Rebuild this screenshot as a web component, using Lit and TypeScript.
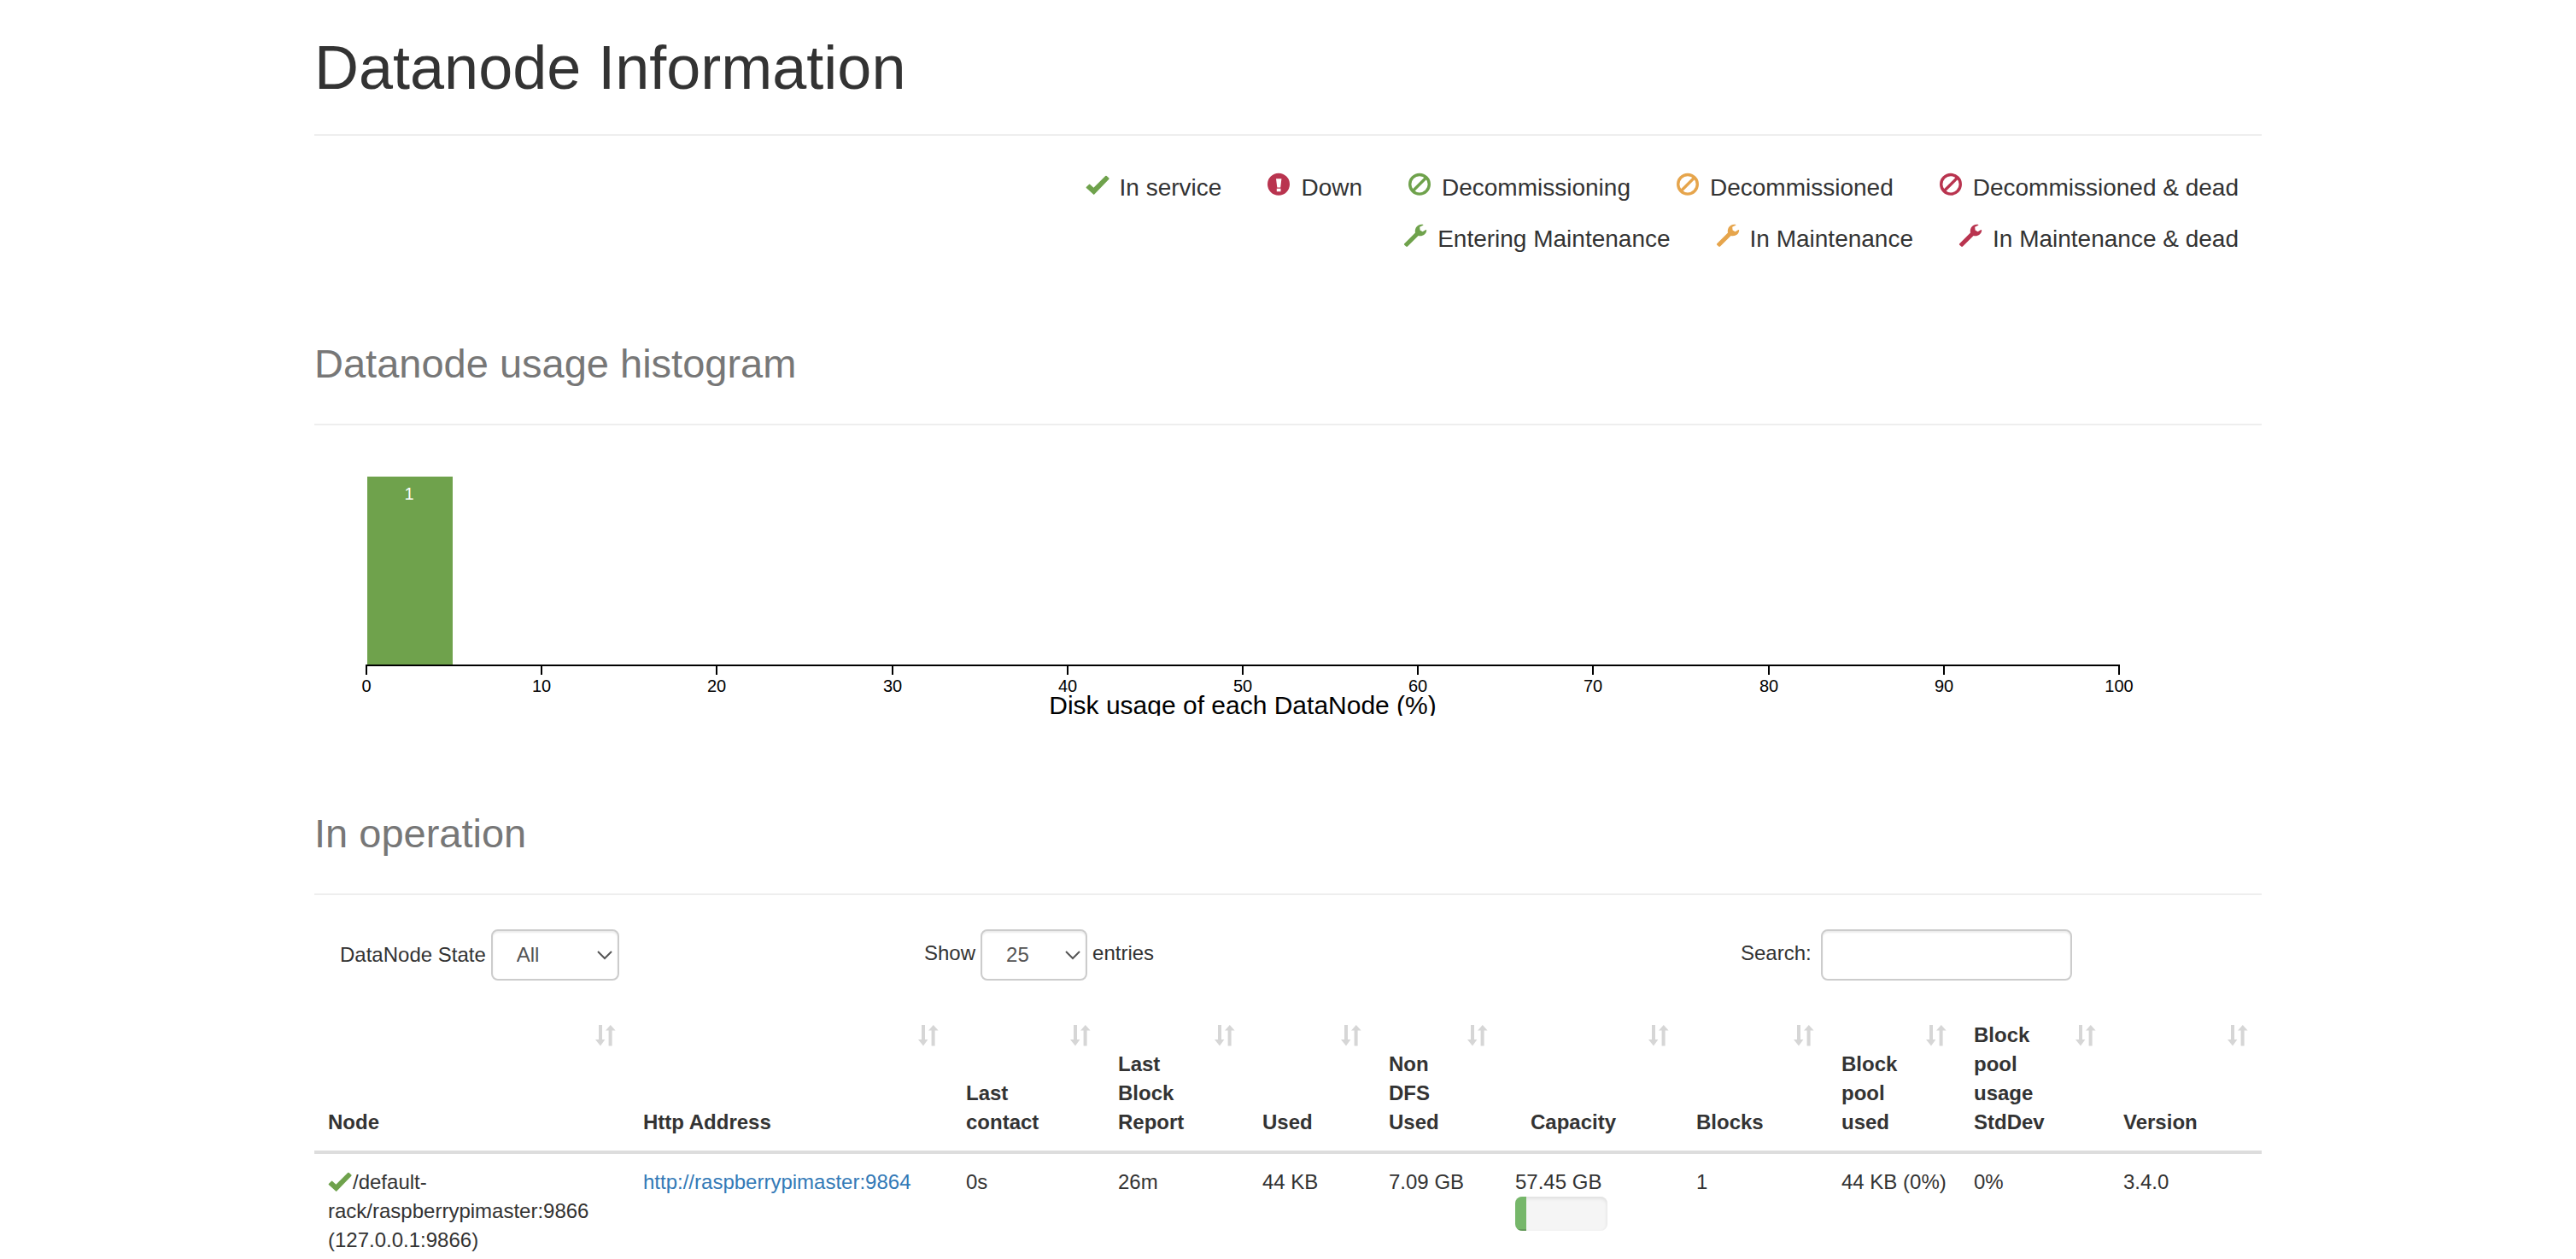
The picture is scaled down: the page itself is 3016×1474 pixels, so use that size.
import { LitElement, html, svg, css, nothing } from "lit";
import { customElement, property } from "lit/decorators.js";
import { classMap } from "lit/directives/class-map.js";

type Tone = "ok" | "warn" | "bad";
type Shape = "check" | "alert" | "ban" | "wrench";

@customElement("state-icon")
export class StateIcon extends LitElement {
  @property() shape: Shape = "check";
  @property() tone: Tone = "ok";

  static styles = css`
    :host {
      display: inline-block;
      width: 28px;
      height: 28px;
    }
    .icon {
      display: block;
      width: 28px;
      height: 28px;
    }
    .ok {
      color: #6fa24c;
    }
    .warn {
      color: #e6a54c;
    }
    .bad {
      color: #b9344f;
    }
  `;

  private glyph() {
    switch (this.shape) {
      case "check":
        return svg`<path fill="currentColor" d="M0.8 17 4.2 13.8Q4.8 13.4 5.3 13.9L9.4 17.8 23.2 4Q24 3.4 24.7 4L27.4 6.6Q27.9 7.2 27.4 7.8L10.3 25.6Q9.7 26.2 9.1 25.6L0.8 18Q0.4 17.5 0.8 17Z"/>`;
      case "alert":
        return svg`<path fill="currentColor" fill-rule="evenodd" d="M14 0.8A13 13 0 1 1 14 26.8A13 13 0 1 1 14 0.8ZM11 7.2 12.3 17.4H16.2L17.4 7.2ZM11.8 18.7V22.3H16.5V18.7Z"/>`;
      case "ban":
        return svg`<g fill="none" stroke="currentColor" stroke-width="3.4"><circle cx="14" cy="13.8" r="11.3"/><path d="M6 21.8 22 5.8"/></g>`;
      case "wrench":
        return svg`<path fill="currentColor" d="M1.2 23.2 14 10.6C12.8 5 17 -0.6 23.2 0.9Q23.8 1.3 23.2 1.7L19.2 3.7 19.6 7.4 22.6 9.2 26.4 6.9Q27.3 6.8 27.2 8C26.8 12.4 22.2 15.2 17.6 14L5 26.6Q4 27.4 3.2 26.6L1.2 24.7Q0.6 24 1.2 23.2Z"/>`;
    }
  }

  render() {
    return html`<svg class="icon ${this.tone}" viewBox="0 0 28 28" aria-hidden="true">${this.glyph()}</svg>`;
  }
}

interface Bin {
  from: number;
  to: number;
  count: number;
}

@customElement("usage-histogram")
export class UsageHistogram extends LitElement {
  @property({ attribute: false }) bins: Bin[] = [];

  static styles = css`
    :host {
      display: block;
    }
    .chart {
      display: block;
      width: 100%;
      height: auto;
      overflow: hidden;
    }
    .axis {
      fill: none;
      stroke: #000;
      stroke-width: 2;
    }
    .bar {
      fill: #6fa24c;
    }
    .tick,
    .count {
      font-size: 20px;
      text-anchor: middle;
    }
    .count {
      fill: #fff;
    }
    .title {
      font-size: 30px;
      text-anchor: middle;
    }
  `;

  render() {
    const left = 61;
    const right = 2113;
    const top = 20;
    const base = 241;
    const x = (v: number) => Math.round(left + ((right - left) * v) / 100);
    const max = Math.max(1, ...this.bins.map((b) => b.count));
    const ticks = [0, 10, 20, 30, 40, 50, 60, 70, 80, 90, 100];
    return html`
      <svg class="chart" viewBox="0 0 2280 300" role="img" aria-label="Datanode usage histogram">
        ${this.bins.map((b) => {
          const h = ((base - 1 - top) * b.count) / max;
          return svg`
            <rect class="bar" x=${x(b.from) + 1} y=${base - 1 - h} width=${x(b.to) - x(b.from) - 3} height=${h}></rect>
            <text class="count" x=${Math.round((x(b.from) + x(b.to)) / 2) - 2} y=${base - h + 26}>${b.count}</text>`;
        })}
        <path class="axis" d="M${left} 252V${base}H${right}V252"></path>
        ${ticks.map(
          (t) => svg`
            ${t > 0 && t < 100 ? svg`<path class="axis" d="M${x(t)} ${base}V252"></path>` : nothing}
            <text class="tick" x=${x(t)} y="272">${t}</text>`
        )}
        <text class="title" x=${x(50)} y="298">Disk usage of each DataNode (%)</text>
      </svg>
    `;
  }
}

interface Column {
  label: string;
  width: number;
  centered?: boolean;
}

const COLUMNS: Column[] = [
  { label: "Node", width: 369 },
  { label: "Http Address", width: 378 },
  { label: "Last contact", width: 178 },
  { label: "Last Block Report", width: 169 },
  { label: "Used", width: 148 },
  { label: "Non DFS Used", width: 148 },
  { label: "Capacity", width: 212, centered: true },
  { label: "Blocks", width: 170 },
  { label: "Block pool used", width: 155 },
  { label: "Block pool usage StdDev", width: 175 },
  { label: "Version", width: 178 },
];

const TOTAL_WIDTH = COLUMNS.reduce((sum, c) => sum + c.width, 0);

const NODES = [
  {
    name: "/default-rack/raspberrypimaster:9866",
    address: "(127.0.0.1:9866)",
    http: "http://raspberrypimaster:9864",
    contact: "0s",
    report: "26m",
    used: "44 KB",
    nonDfs: "7.09 GB",
    capacity: "57.45 GB",
    percent: 12,
    blocks: "1",
    poolUsed: "44 KB (0%)",
    stdDev: "0%",
    version: "3.4.0",
  },
];

const LEGEND: { shape: Shape; tone: Tone; label: string }[][] = [
  [
    { shape: "check", tone: "ok", label: "In service" },
    { shape: "alert", tone: "bad", label: "Down" },
    { shape: "ban", tone: "ok", label: "Decommissioning" },
    { shape: "ban", tone: "warn", label: "Decommissioned" },
    { shape: "ban", tone: "bad", label: "Decommissioned & dead" },
  ],
  [
    { shape: "wrench", tone: "ok", label: "Entering Maintenance" },
    { shape: "wrench", tone: "warn", label: "In Maintenance" },
    { shape: "wrench", tone: "bad", label: "In Maintenance & dead" },
  ],
];

@customElement("app-root")
export class AppRoot extends LitElement {
  static styles = css`
    :host {
      display: block;
      background: #fff;
      color: #333;
      font-family: "Liberation Sans", Arial, sans-serif;
      font-size: 24px;
      line-height: 34px;
    }
    .page {
      max-width: 2280px;
      margin: 0 auto;
    }
    .title {
      margin: 0;
      padding: 40px 0 39px;
      border-bottom: 2px solid #eee;
      font-size: 72px;
      line-height: 78px;
      font-weight: 400;
    }
    .legend {
      display: flex;
      flex-direction: column;
      padding: 31px 27px 0;
    }
    .legend-row {
      display: flex;
      justify-content: flex-end;
      gap: 53px;
      margin: 0;
      padding: 0;
      list-style: none;
      font-size: 28px;
      line-height: 60px;
    }
    .legend-item {
      display: flex;
      align-items: center;
      gap: 12px;
    }
    .legend-icon {
      margin-bottom: 8px;
    }
    .heading {
      margin: 0;
      padding: 90px 0 44px;
      border-bottom: 2px solid #eee;
      color: #777;
      font-size: 47px;
      line-height: 52px;
      font-weight: 400;
    }
    .heading.later {
      padding-top: 112px;
    }
    .histogram {
      padding-top: 40px;
    }
    .filters {
      display: grid;
      grid-template-columns: 684fr 956fr 580fr;
      padding: 40px 30px 31px;
    }
    .filter {
      display: flex;
      align-items: center;
      gap: 6px;
    }
    .raised {
      padding-bottom: 4px;
    }
    .picker {
      display: grid;
      align-items: center;
    }
    .select,
    .chevron {
      grid-area: 1 / 1;
    }
    .select,
    .search {
      box-sizing: border-box;
      height: 60px;
      border: 2px solid #ccc;
      border-radius: 8px;
      background: #fff;
      box-shadow: inset 0 2px 2px rgba(0, 0, 0, 0.075);
      color: #555;
      font: inherit;
      margin: 0;
    }
    .select {
      appearance: none;
      width: 150px;
      padding: 0 28px;
    }
    .select.narrow {
      width: 125px;
    }
    .search {
      width: 294px;
      padding: 0 24px;
      margin-left: 5px;
    }
    .chevron {
      justify-self: end;
      width: 18px;
      height: 11px;
      margin-right: 8px;
      pointer-events: none;
    }
    .nodes {
      width: 100%;
      border-collapse: collapse;
      table-layout: fixed;
    }
    .head {
      position: relative;
      padding: 16px 60px 16px 16px;
      border-bottom: 4px solid #ddd;
      font-weight: 700;
      text-align: left;
      vertical-align: bottom;
    }
    .head.centered {
      text-align: center;
    }
    .sort {
      position: absolute;
      top: 21px;
      right: 16px;
      width: 24px;
      height: 25px;
      padding: 0;
      border: 0;
      background: none;
      color: #d6d6d6;
      cursor: pointer;
    }
    .sort-icon {
      display: block;
      width: 24px;
      height: 25px;
    }
    .cell {
      padding: 16px 0 0 16px;
      vertical-align: top;
    }
    .node-icon {
      height: 24px;
      margin-right: 1px;
      vertical-align: -1px;
    }
    .link {
      color: #337ab7;
      text-decoration: none;
    }
    .meter {
      width: 108px;
      height: 40px;
      border-radius: 8px;
      overflow: hidden;
      background: #f5f5f5;
      box-shadow: inset 0 2px 4px rgba(0, 0, 0, 0.1);
    }
    .meter-fill {
      height: 100%;
      background: #76b76a;
      box-shadow: inset 0 -2px 0 rgba(0, 0, 0, 0.15);
    }
  `;

  private chevron() {
    return html`<svg class="chevron" viewBox="0 0 18 11" aria-hidden="true">
      <path d="M1 1 9 9 17 1" fill="none" stroke="#555" stroke-width="2" />
    </svg>`;
  }

  private sortIcon() {
    return html`<svg class="sort-icon" viewBox="0 0 24 25" aria-hidden="true">
      <path fill="currentColor" d="M4 0H8V17H11.4L6 24.4 0 17H4ZM15.6 24.4V6.4H12L17.8 0 23.6 6.4H19.6V24.4Z" />
    </svg>`;
  }

  private renderLegend() {
    return html`<div class="legend">
      ${LEGEND.map(
        (row) => html`<ul class="legend-row">
          ${row.map(
            (item) => html`<li class="legend-item">
              <state-icon class="legend-icon" .shape=${item.shape} .tone=${item.tone}></state-icon>
              <span>${item.label}</span>
            </li>`
          )}
        </ul>`
      )}
    </div>`;
  }

  private renderFilters() {
    return html`<div class="filters">
      <div class="filter">
        <label for="state">DataNode State</label>
        <span class="picker">
          <select class="select" id="state">
            <option>All</option>
          </select>
          ${this.chevron()}
        </span>
      </div>
      <div class="filter">
        <label class="raised" for="length">Show</label>
        <span class="picker">
          <select class="select narrow" id="length">
            <option>25</option>
          </select>
          ${this.chevron()}
        </span>
        <span class="raised">entries</span>
      </div>
      <div class="filter">
        <label class="raised" for="search">Search:</label>
        <input class="search" id="search" type="search" />
      </div>
    </div>`;
  }

  private renderTable() {
    return html`<table class="nodes">
      <colgroup>
        ${COLUMNS.map((c) => html`<col style="width: ${(c.width / TOTAL_WIDTH) * 100}%" />`)}
      </colgroup>
      <thead>
        <tr>
          ${COLUMNS.map(
            (c) => html`<th class=${classMap({ head: true, centered: !!c.centered })} scope="col">
              ${c.label}<button class="sort" type="button" aria-label="Sort by ${c.label}">${this.sortIcon()}</button>
            </th>`
          )}
        </tr>
      </thead>
      <tbody>
        ${NODES.map(
          (n) => html`<tr>
            <td class="cell">
              <state-icon class="node-icon" shape="check" tone="ok"></state-icon>${n.name}<br />${n.address}
            </td>
            <td class="cell"><a class="link" href=${n.http}>${n.http}</a></td>
            <td class="cell">${n.contact}</td>
            <td class="cell">${n.report}</td>
            <td class="cell">${n.used}</td>
            <td class="cell">${n.nonDfs}</td>
            <td class="cell">
              ${n.capacity}
              <div class="meter"><div class="meter-fill" style="width: ${n.percent}%"></div></div>
            </td>
            <td class="cell">${n.blocks}</td>
            <td class="cell">${n.poolUsed}</td>
            <td class="cell">${n.stdDev}</td>
            <td class="cell">${n.version}</td>
          </tr>`
        )}
      </tbody>
    </table>`;
  }

  render() {
    return html`<main class="page">
      <h1 class="title">Datanode Information</h1>
      ${this.renderLegend()}
      <h2 class="heading">Datanode usage histogram</h2>
      <usage-histogram class="histogram" .bins=${[{ from: 0, to: 5, count: 1 }]}></usage-histogram>
      <h2 class="heading later">In operation</h2>
      ${this.renderFilters()} ${this.renderTable()}
    </main>`;
  }
}
